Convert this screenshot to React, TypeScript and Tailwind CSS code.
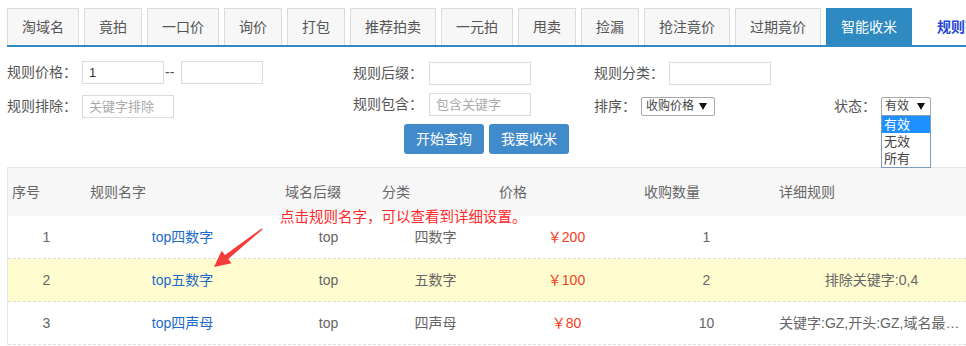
import React from "react";

const tabs = ["淘域名", "竟拍", "一口价", "询价", "打包", "推荐拍卖", "一元拍", "甩卖", "捡漏", "抢注竟价", "过期竟价"];

const cols = "grid grid-cols-[77px_195px_97px_117px_145px_135px_193px]";

function Arrow() {
  return (
    <svg className="h-[7px] w-[8px]" viewBox="0 0 8 7">
      <polygon points="0,0 8,0 4,7" fill="#111" />
    </svg>
  );
}

const rows = [
  { n: "1", name: "top四数字", suf: "top", cat: "四数字", price: "￥200", qty: "1", detail: "", bg: "bg-white", dc: "text-center pr-[3px]" },
  { n: "2", name: "top五数字", suf: "top", cat: "五数字", price: "￥100", qty: "2", detail: "排除关键字:0,4", bg: "bg-[#fffdd0]", dc: "text-center pr-[3px]" },
  { n: "3", name: "top四声母", suf: "top", cat: "四声母", price: "￥80", qty: "10", detail: "关键字:GZ,开头:GZ,域名最大长度:6", bg: "bg-white", dc: "text-left pr-[1px]" },
];

export default function App() {
  return (
    <div className="relative h-[346px] w-[966px] overflow-hidden bg-white font-['Liberation_Sans','Noto_Sans_CJK_SC',sans-serif] text-[14px] text-[#555]">
      {/* tabs */}
      <div className="flex gap-[5px] pl-[7px] pt-[8px]">
        {tabs.map((t) => (
          <div key={t} className="flex h-[37px] items-center whitespace-nowrap border border-b-0 border-[#dcdcdc] bg-[#f7f7f7] px-[14px] leading-none text-[#555]">
            {t}
          </div>
        ))}
        <div className="flex h-[37px] items-center whitespace-nowrap border border-b-0 border-[#2e8ac1] bg-[#2e8ac1] px-[14px] leading-none text-white">
          智能收米
        </div>
        <div className="flex h-[37px] items-center whitespace-nowrap pl-[20px] font-bold leading-none text-[#2548d6]">
          规则列表
        </div>
      </div>
      <div className="ml-[7px] h-[2px] bg-[#2e8ac1]" />

      {/* form row 1 */}
      <div className="mt-[11px] flex h-[28px] items-center pl-[7px]">
        <div className="flex w-[346px] items-center">
          <span className="w-[75px] whitespace-nowrap">规则价格：</span>
          <input readOnly value="1" className="h-[23px] w-[82px] border border-[#dcdcdc] pl-[6px] text-[13px] text-[#333] outline-none" />
          <span className="w-[17px] pl-[1px] leading-none">--</span>
          <input readOnly className="h-[23px] w-[82px] border border-[#dcdcdc] outline-none" />
        </div>
        <div className="flex w-[241px] items-center pt-[2px]">
          <span className="w-[76px] whitespace-nowrap">规则后缀：</span>
          <input readOnly className="h-[23px] w-[102px] border border-[#dcdcdc] outline-none" />
        </div>
        <div className="flex items-center pt-[2px]">
          <span className="w-[75px] whitespace-nowrap">规则分类：</span>
          <input readOnly className="h-[23px] w-[102px] border border-[#dcdcdc] outline-none" />
        </div>
      </div>

      {/* form row 2 */}
      <div className="mt-[6px] flex h-[28px] items-center pl-[7px]">
        <div className="flex w-[346px] items-center">
          <span className="w-[75px] whitespace-nowrap">规则排除：</span>
          <input readOnly placeholder="关键字排除" className="h-[23px] w-[92px] border border-[#dcdcdc] pl-[6px] text-[13px] outline-none placeholder:text-[#aaa]" />
        </div>
        <div className="flex w-[241px] items-center pb-[3px]">
          <span className="w-[76px] whitespace-nowrap">规则包含：</span>
          <input readOnly placeholder="包含关键字" className="h-[23px] w-[102px] border border-[#dcdcdc] pl-[6px] text-[13px] outline-none placeholder:text-[#aaa]" />
        </div>
        <div className="flex w-[240px] items-center">
          <span className="w-[47px] whitespace-nowrap">排序：</span>
          <div className="flex h-[19px] w-[74px] items-center justify-between rounded-[2px] border border-[#a9a9a9] pl-[4px] pr-[7px] text-[12px] leading-none text-[#444]">
            <span>收购价格</span>
            <Arrow />
          </div>
        </div>
        <div className="flex items-center">
          <span className="w-[47px] whitespace-nowrap">状态：</span>
          <div className="flex h-[19px] w-[50px] items-center justify-between rounded-[2px] border border-[#a9a9a9] pl-[3px] pr-[5px] text-[12px] leading-none text-[#444]">
            <span>有效</span>
            <Arrow />
          </div>
        </div>
      </div>

      {/* buttons */}
      <div className="mt-[4px] flex justify-center gap-[5px] pl-[7px]">
        <button className="h-[30px] w-[80px] rounded-[3px] bg-[#428bca] text-[14px] text-white">开始查询</button>
        <button className="h-[30px] w-[80px] rounded-[3px] bg-[#428bca] text-[14px] text-white">我要收米</button>
      </div>

      {/* table */}
      <div className="relative ml-[7px] mt-[13px] border-l border-t border-[#e6e6e6]">
        <div className={`${cols} h-[48px] items-center bg-[#f7f7f7] text-[#666]`}>
          {["序号", "规则名字", "域名后缀", "分类", "价格", "收购数量", "详细规则"].map((h, i) => (
            <div key={h} className={i === 0 ? "pl-[4px]" : "pl-[5px]"}>{h}</div>
          ))}
        </div>
        {rows.map((r) => (
          <div key={r.n} className={`${cols} h-[43px] items-center border-b border-dashed border-[#dddddd] ${r.bg} text-[#666]`}>
            <div className="text-center">{r.n}</div>
            <div className="text-center text-[#1e6ac9]">{r.name}</div>
            <div className="text-center">{r.suf}</div>
            <div className="text-center">{r.cat}</div>
            <div className="text-center text-[#f23d1e]">{r.price}</div>
            <div className="text-center">{r.qty}</div>
            <div className={`truncate pl-[5px] ${r.dc}`}>{r.detail}</div>
          </div>
        ))}
        <div className="absolute left-[272px] top-[42px] whitespace-nowrap text-[14.5px] leading-none text-[#ff2a2a]">
          点击规则名字，可以查看到详细设置。
        </div>
      </div>

      {/* status dropdown list */}
      <div className="absolute left-[881px] top-[115px] w-[50px] border border-[#7f9db9] bg-white text-[13px] leading-[17px] text-[#444]">
        <div className="h-[17px] bg-[#1e90ff] pl-[2px] text-white">有效</div>
        <div className="h-[17px] pl-[2px]">无效</div>
        <div className="h-[17px] pl-[2px]">所有</div>
      </div>

      {/* annotation arrow */}
      <svg className="pointer-events-none absolute left-0 top-0" width="966" height="346">
        <polygon
          points="262.5,229.5 228.2,259 231.6,263.3 214,267 221.6,250.7 225,255 261.5,228.5"
          fill="#f53b3b"
        />
      </svg>
    </div>
  );
}
